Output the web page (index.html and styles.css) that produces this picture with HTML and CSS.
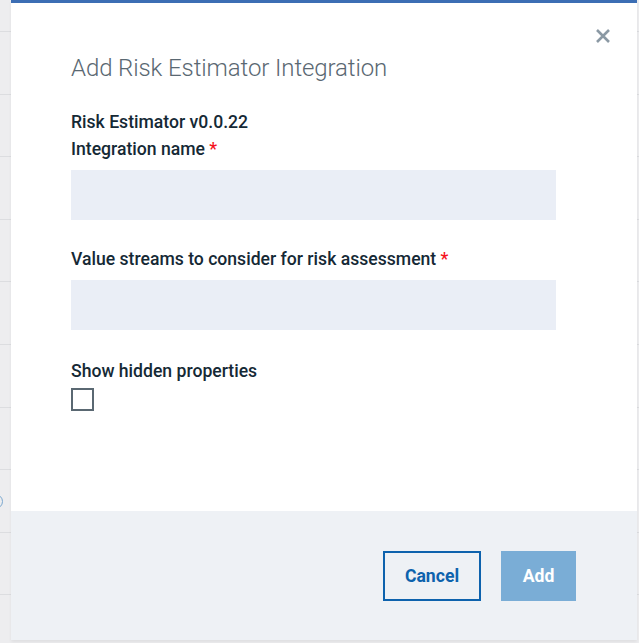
FILE: index.html
```html
<!DOCTYPE html>
<html lang="en">
<head>
<meta charset="utf-8">
<title>Add Risk Estimator Integration</title>
<link rel="stylesheet" href="styles.css">
</head>
<body>
<div class="page">
  <div class="row"></div>
  <div class="row"></div>
  <div class="row"></div>
  <div class="row"></div>
  <div class="row"></div>
  <div class="row"></div>
  <div class="row"></div>
  <div class="row"><span class="ring"></span></div>
  <div class="row"></div>
  <div class="row"></div>
</div>
<div class="modal" role="dialog">
  <button class="close" aria-label="Close">
    <svg width="16" height="16" viewBox="0 0 16 16"><path d="M2 2 L14 14 M14 2 L2 14" stroke="#8b99a4" stroke-width="2.6" fill="none"/></svg>
  </button>
  <div class="modal-body">
    <h2 class="title">Add Risk Estimator Integration</h2>
    <div class="version">Risk Estimator v0.0.22</div>
    <div class="field">
      <label class="label">Integration name <span class="req">*</span></label>
      <div class="input"></div>
    </div>
    <div class="field">
      <label class="label">Value streams to consider for risk assessment <span class="req">*</span></label>
      <div class="input"></div>
    </div>
    <div class="field field-check">
      <label class="label">Show hidden properties</label>
      <div class="checkbox"></div>
    </div>
  </div>
  <div class="modal-footer">
    <button class="btn btn-secondary">Cancel</button>
    <button class="btn btn-primary">Add</button>
  </div>
</div>
</body>
</html>
```
FILE: styles.css
```css
* { box-sizing: border-box; }
html, body { margin: 0; padding: 0; }
body {
  width: 639px;
  height: 643px;
  overflow: hidden;
  background: #ededef;
  font-family: Roboto, "Liberation Sans", sans-serif;
  position: relative;
}
.page {
  padding-top: 31px;
}
.row {
  height: 62.6px;
  border-top: 1px solid #dcdde0;
  position: relative;
}
.ring {
  position: absolute;
  left: -12px;
  top: 24px;
  width: 15px;
  height: 15px;
  border: 1.5px solid #7aa7cf;
  border-radius: 50%;
}
.modal {
  position: absolute;
  left: 11px;
  top: 0;
  width: 626px;
  height: 640px;
  background: #fff;
  border-top: 3px solid #3c6eb4;
  display: flex;
  flex-direction: column;
  box-shadow: 0 2px 3px rgba(0,0,0,0.06);
}
.close {
  position: absolute;
  right: 26px;
  top: 25px;
  border: 0;
  background: none;
  padding: 0;
  width: 16px;
  height: 16px;
  display: flex;
}
.modal-body {
  flex: 1;
  padding: 51px 81px 0 60px;
}
.title {
  margin: 0;
  font-size: 24px;
  font-weight: 300;
  color: #5a6872;
  line-height: 28px;
  letter-spacing: -0.1px;
}
.version {
  margin-top: 27px;
  margin-bottom: 1px;
  font-size: 17.6px;
  font-weight: 500;
  color: #152935;
  line-height: 26px;
}
.field {
  display: flex;
  flex-direction: column;
}
.label {
  font-size: 17.6px;
  font-weight: 500;
  color: #152935;
  line-height: 26px;
  margin-bottom: 8px;
}
.field + .field { margin-top: 26px; }
.field + .field-check { margin-top: 28px; }
.req { color: #f5121e; }
.input {
  height: 50px;
  background: #eaeef6;
  width: 485px;
}
.checkbox {
  width: 23px;
  height: 23px;
  border: 2px solid #5a6872;
  margin-top: -4px;
}
.modal-footer {
  height: 129px;
  background: #eef1f5;
  display: flex;
  justify-content: flex-end;
  align-items: flex-start;
  gap: 20px;
  padding: 40px 61px 0 0;
}
.btn {
  height: 50px;
  font-family: Roboto, "Liberation Sans", sans-serif;
  font-size: 17.6px;
  font-weight: 700;
  padding: 0;
  cursor: pointer;
}
.btn-secondary {
  width: 98px;
  background: transparent;
  border: 2px solid #0d62ad;
  color: #0d62ad;
}
.btn-primary {
  width: 75px;
  background: #7aadd6;
  border: 0;
  color: #fff;
}
```
